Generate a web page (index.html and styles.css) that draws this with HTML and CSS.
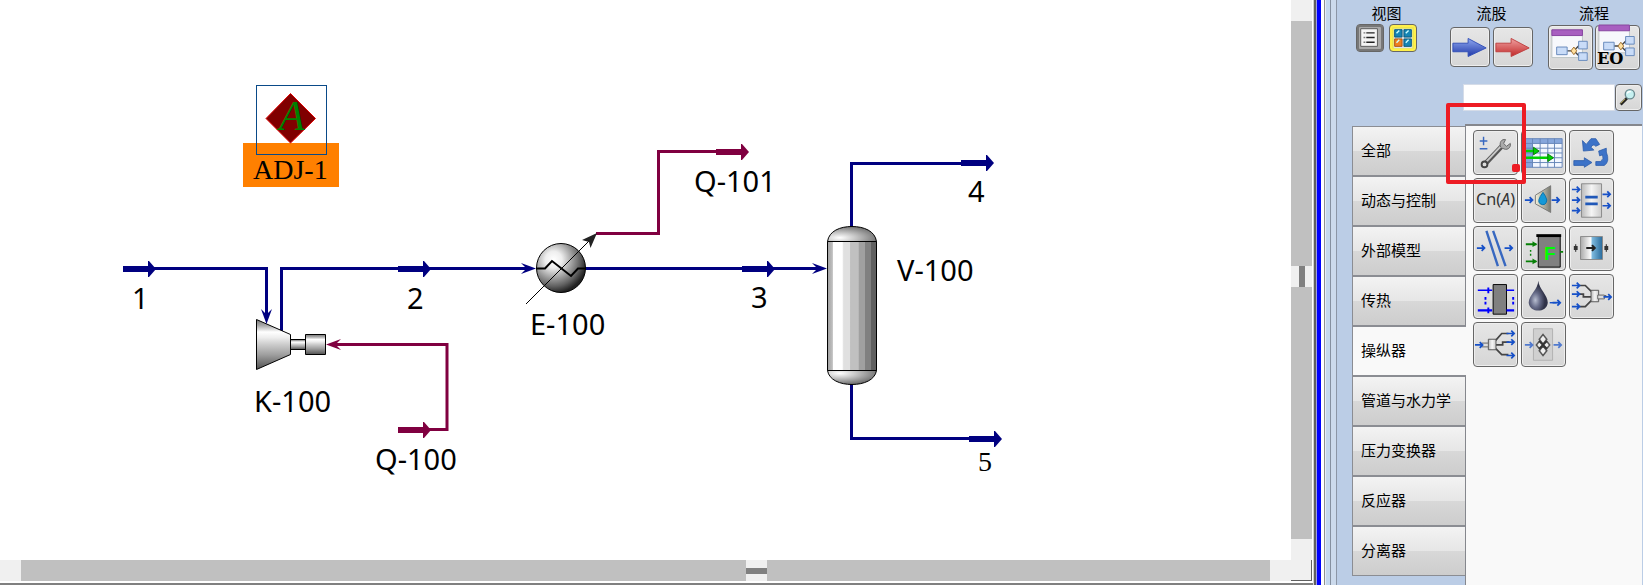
FILE: index.html
```html
<!DOCTYPE html>
<html lang="zh-CN">
<head>
<meta charset="utf-8">
<title>流程图</title>
<link rel="stylesheet" href="styles.css">
</head>
<body>
<div class="app">
  <main class="workspace">
    <div class="canvas">
      <svg class="flowsheet" width="1100" height="520" viewBox="0 0 1100 520" role="img" aria-label="工艺流程图">
        <defs>
          <linearGradient id="metalV" x1="0" y1="0" x2="0" y2="1">
            <stop offset="0" stop-color="#777"/><stop offset=".12" stop-color="#aaa"/><stop offset=".25" stop-color="#fff"/><stop offset=".36" stop-color="#eee"/><stop offset=".5" stop-color="#ccc"/><stop offset=".7" stop-color="#a0a0a0"/><stop offset="1" stop-color="#505050"/>
          </linearGradient>
          <linearGradient id="metalH">
            <stop offset="0" stop-color="#a0a0a0"/><stop offset=".1" stop-color="#c0c0c0"/><stop offset=".12" stop-color="#fff"/><stop offset=".3" stop-color="#fff"/><stop offset=".33" stop-color="#e0e0e0"/><stop offset=".46" stop-color="#e0e0e0"/><stop offset=".47" stop-color="#c0c0c0"/><stop offset=".63" stop-color="#c0c0c0"/><stop offset=".64" stop-color="#a0a0a0"/><stop offset=".76" stop-color="#a0a0a0"/><stop offset=".77" stop-color="#808080"/><stop offset=".88" stop-color="#808080"/><stop offset=".89" stop-color="#606060"/><stop offset="1" stop-color="#606060"/>
          </linearGradient>
          <radialGradient id="cap" cx=".25" cy=".75" r=".8">
            <stop offset="0" stop-color="#fff"/><stop offset=".4" stop-color="#c8c8c8"/><stop offset="1" stop-color="#707070"/>
          </radialGradient>
          <radialGradient id="capLow" cx=".25" cy=".2" r=".8">
            <stop offset="0" stop-color="#fff"/><stop offset=".4" stop-color="#c8c8c8"/><stop offset="1" stop-color="#707070"/>
          </radialGradient>
          <radialGradient id="ball" cx=".35" cy=".33" r=".68">
            <stop offset="0" stop-color="#fff"/><stop offset=".25" stop-color="#eee"/><stop offset=".55" stop-color="#a0a0a0"/><stop offset=".8" stop-color="#606060"/><stop offset="1" stop-color="#222"/>
          </radialGradient>
          <path id="stream" d="M0-3H25V-8H26L33 0L26 8H25V3H0Z"/>
          <path id="barb" d="M0 0L-15-5.500L-11-1.500V1.500L-15 5.500Z"/>
        </defs>

        <g class="material-line">
          <path d="M150 268.500H266.500V314"/>
          <path d="M281.500 331V268.500H528"/>
          <path d="M585 268.500H818"/>
          <path d="M851.500 228V163.500H965"/>
          <path d="M851.500 384V438.500H972"/>
        </g>
        <g class="energy-line">
          <path d="M425 429.500H447V344.500H336"/>
          <path d="M596 233.500H658.500V151.500H720"/>
        </g>

        <path d="M256.500 319.500L290.500 334.500V354.500L256.500 369.500Z" fill="url(#metalV)" stroke="#000"/>
        <path d="M290.500 339.500H305.500V349.500H290.500Z" fill="url(#metalV)" stroke="#000"/>
        <path d="M305.500 334.500H325.500V354.500H305.500Z" fill="url(#metalV)" stroke="#000"/>

        <circle cx="561" cy="268" r="24.500" fill="url(#ball)" stroke="#000"/>
        <path d="M536 268.500H545L552 261L571 276L578 268.500H586" fill="none" stroke="#000" stroke-width="2"/>
        <path d="M526 304L590 240" stroke="#000"/>
        <path d="M597 233L582 240L589 242L590.500 248Z" fill="#222"/>

        <path d="M827.500 241.500C829 231 840 226.500 852 226.500S875 231 876.500 241.500Z" fill="url(#cap)" stroke="#000"/>
        <path d="M827.500 370.500C829 380 840 384.500 852 384.500S875 380 876.500 370.500Z" fill="url(#capLow)" stroke="#000"/>
        <path d="M827.500 241.500H876.500V370.500H827.500Z" fill="url(#metalH)" stroke="#000"/>

        <g class="material">
          <use href="#stream" x="123" y="269"/><use href="#stream" x="398" y="269"/><use href="#stream" x="742" y="269"/><use href="#stream" x="961" y="163"/><use href="#stream" x="969" y="439"/>
          <use href="#barb" transform="translate(266.500 324) rotate(90)"/><use href="#barb" x="536" y="268.500"/><use href="#barb" x="827" y="268.500"/>
        </g>
        <g class="energy">
          <use href="#stream" x="398" y="430"/><use href="#stream" x="716" y="152"/>
          <use href="#barb" transform="translate(326 344.500) rotate(180)"/>
        </g>

        <rect x="243" y="143" width="96" height="44" fill="#ff8000"/>
        <path d="M266 118.500L290.500 93.500L315.500 118.500L290.500 143Z" fill="#800000" stroke="#e00000"/>
        <rect x="256.500" y="85.500" width="70" height="69" fill="none" stroke="#0a4a88"/>
        <text class="adjust-mark" x="279" y="130">A</text>
        <g class="labels">
          <text class="serif" x="253" y="179">ADJ-1</text>
          <text x="132" y="309">1</text><text x="407" y="309">2</text><text x="751" y="308">3</text><text x="968" y="202">4</text><text class="serif" x="978" y="471">5</text>
          <text x="254" y="412">K-100</text><text x="375" y="470">Q-100</text><text x="530" y="335">E-100</text><text x="694" y="192">Q-101</text><text x="897" y="281">V-100</text>
        </g>
      </svg>
    </div>
    <div class="scroll scroll-v"><span class="scroll-thumb"></span><span class="grip"></span><span class="scroll-thumb"></span></div>
    <div class="scroll scroll-h"><span class="scroll-thumb first"></span><span class="grip"></span><span class="scroll-thumb"></span></div>
    <div class="corner"></div>
  </main>
  <div class="divider"></div>

  <aside class="palette">
    <header class="toolbar">
      <section class="group view">
        <h2>视图</h2>
        <div class="buttons">
          <button class="btn small list" aria-label="列表"><svg viewBox="0 0 28 28"><path d="M4 4H22V23H4Z" fill="#f4f4f4" stroke="#555"/><path d="M10 8.500H19M10 13.500H19M10 18.500H19" stroke="#222" stroke-width="1.500"/><path d="M7 8.500H9M7 13.500H9M7 18.500H9" stroke="#777" stroke-width="1.500"/></svg></button>
          <button class="btn small active" aria-label="图标"><svg viewBox="0 0 28 28"><path d="M4 4H24V25H4Z" fill="#dfe6e8"/><path d="M5 5H13V13H5ZM15 5H23V13H15ZM15 15H23V23H15Z" fill="#1685b5" stroke="#075577"/><path d="M5 15H13V23H5Z" fill="#f08020" stroke="#a85010"/><path d="M7 9L10 6M17 9L20 6M17 19L20 16M7 19L10 16" stroke="#cff" stroke-width="1.500"/></svg></button>
        </div>
      </section>
      <section class="group streams">
        <h2>流股</h2>
        <div class="buttons">
          <button class="btn medium" aria-label="物流"><svg viewBox="0 0 40 40"><defs><linearGradient id="blue" x2="0" y2="1"><stop stop-color="#8fa8f0"/><stop offset="1" stop-color="#2038a8"/></linearGradient><linearGradient id="red" x2="0" y2="1"><stop stop-color="#f0a0a0"/><stop offset="1" stop-color="#c02828"/></linearGradient></defs><path d="M2 16H18V11L37 21L18 30V25H2Z" fill="url(#blue)" stroke="#3350b8"/></svg></button>
          <button class="btn medium" aria-label="能流"><svg viewBox="0 0 40 40"><path d="M2 16H18V11L37 21L18 30V25H2Z" fill="url(#red)" stroke="#c04040"/></svg></button>
        </div>
      </section>
      <section class="group">
        <h2>流程</h2>
        <div class="buttons">
          <button class="btn" aria-label="子流程"><svg viewBox="0 0 45 45"><defs><g id="sheet"><path d="M3 4H35V33H3Z" fill="#f7f8fc" stroke="#bcc4c4"/><path d="M3 4H35V10H3Z" fill="#a85fc0" stroke="#8542a0"/><path d="M19 26H25M26 26L32 20M26 26L32 32" stroke="#444" stroke-width="1.500" fill="none"/><g fill="#c9dcf8" stroke="#6688bb"><path d="M8 22H19V30H8ZM31 16H40V24H31ZM31 28H40V36H31Z"/></g><path d="M26 22L29 26L26 30L23 26Z" fill="#ffe0a0" stroke="#a07030"/></g></defs><use href="#sheet"/></svg></button>
          <button class="btn" aria-label="EO 子流程"><svg viewBox="0 0 45 45"><use href="#sheet" y="-5"/><text class="eo" x="1" y="40">EO</text></svg></button>
        </div>
      </section>
    </header>

    <form class="search">
      <input type="text" aria-label="搜索">
      <button class="btn search-btn" type="button" aria-label="搜索"><svg viewBox="0 0 27 27"><path d="M5 21L12 14" stroke="#222" stroke-width="3"/><path d="M5 20L10 15" stroke="#c8b860" stroke-width="1"/><circle cx="15" cy="10" r="5" fill="#c5f0f0" stroke="#6a8a90" stroke-width="1.500"/><path d="M12 9Q13 7 16 7" stroke="#fff" stroke-width="1.500" fill="none"/></svg></button>
    </form>

    <div class="browser">
      <nav class="tabs">
        <button class="tab">全部</button>
        <button class="tab">动态与控制</button>
        <button class="tab">外部模型</button>
        <button class="tab">传热</button>
        <button class="tab selected">操纵器</button>
        <button class="tab">管道与水力学</button>
        <button class="tab">压力变换器</button>
        <button class="tab">反应器</button>
        <button class="tab">分离器</button>
      </nav>
      <div class="tools">
        <button class="btn" aria-label="调节"><svg viewBox="0 0 45 45"><defs><path id="arr" d="M0 0H8M5-3L8 0L5 3" fill="none" stroke="#1650c8" stroke-width="1.800"/></defs><path d="M10 6V15M6 10.500H14M6 18.500H14" stroke="#3868c0" stroke-width="1.500"/><path d="M12 34L30 15" stroke="#555" stroke-width="5"/><path d="M12 33L30 14" stroke="#c9c9c9" stroke-width="2"/><circle cx="11" cy="35" r="3" fill="#ddd" stroke="#444" stroke-width="2"/><path d="M28 17C26 12 29 8 33 9L31 13L34 16L38 13C39 18 34 21 30 18" fill="#aaa" stroke="#666"/></svg></button>
        <button class="btn" aria-label="电子表格"><svg viewBox="0 0 45 45"><path d="M3 8H42V38H3Z" fill="#f3f7ff"/><path d="M3 8H42V13H3ZM3 8H11V38H3Z" fill="#86a6dc"/><path d="M3 8H42V38H3ZM3 13H42M3 18H42M3 23H42M3 28H42M3 33H42M11 8V38M19 8V38M27 8V38M34 8V38" fill="none" stroke="#6685b8"/><path d="M3 21H13M3 28H28" stroke="#00d000" stroke-width="2.500"/><path d="M12 17L18 21L12 25ZM27 24L33 28L27 32Z" fill="#00d000" stroke="#078007"/></svg></button>
        <button class="btn" aria-label="循环"><svg viewBox="0 0 45 45"><g fill="#3d73c8" stroke="#295aa8" stroke-width=".8"><path d="M4 31H15V28L23 33L15 38V36H4Z"/><path d="M13 10L14 21L25 20L22 17Q24 13 27 16L31 14L27 8H22L17 14Z"/><path d="M30 21L38 18V22Q42 32 36 36H27V32H32Q36 29 34 25L31 26Z"/></g></svg></button>
        <button class="btn" aria-label="Cn(A)"><svg viewBox="0 0 45 45"><text class="formula" x="2" y="27">Cn(<tspan font-style="italic">A</tspan>)</text></svg></button>
        <button class="btn" aria-label="切割"><svg viewBox="0 0 45 45"><path d="M14 17L30 7V35L14 26Z" fill="url(#tan)" stroke="#777"/><defs><linearGradient id="tan"><stop stop-color="#f4f2dd"/><stop offset="1" stop-color="#77786f"/></linearGradient></defs><path d="M22 14Q15 23 19 26Q25 29 26 22Q25 18 22 14" fill="#1499d8" stroke="#0870aa"/><use href="#arr" x="3" y="22"/><use href="#arr" x="31" y="22"/></svg></button>
        <button class="btn" aria-label="平衡"><svg viewBox="0 0 45 45"><defs><linearGradient id="plate"><stop stop-color="#bbb"/><stop offset=".5" stop-color="#f5f5f5"/><stop offset="1" stop-color="#ccc"/></linearGradient></defs><path d="M12 5H33V40H12Z" fill="url(#plate)" stroke="#888"/><path d="M16 19H29M16 26H29" stroke="#2058b8" stroke-width="3"/><use href="#arr" x="2" y="11"/><use href="#arr" x="2" y="22"/><use href="#arr" x="2" y="33"/><use href="#arr" x="34" y="16"/><use href="#arr" x="34" y="28"/></svg></button>
        <button class="btn" aria-label="边界"><svg viewBox="0 0 45 45"><path d="M13 4L25 41M20 4L33 41" stroke="#3868c0" stroke-width="2.500"/><use href="#arr" x="3" y="22"/><use href="#arr" x="32" y="22"/></svg></button>
        <button class="btn" aria-label="公式"><svg viewBox="0 0 45 45"><path d="M17 10H40V42H17Z" fill="#808080" stroke="#000"/><path d="M15 9H41" stroke="#000" stroke-width="3"/><path d="M4 18H15M4 36H15M40 26H43" stroke="#078007" stroke-width="2"/><path d="M11 15L16 18L11 21ZM11 33L16 36L11 39Z" fill="#078007"/><path d="M9 24V32" stroke="#078007" stroke-width="1.500" stroke-dasharray="2 2"/><text class="function" x="23" y="35">F</text></svg></button>
        <button class="btn" aria-label="流股变换"><svg viewBox="0 0 45 45"><defs><linearGradient id="change"><stop stop-color="#aaa"/><stop offset=".48" stop-color="#fff"/><stop offset=".52" stop-color="#80bce0"/><stop offset="1" stop-color="#286a9b"/></linearGradient></defs><path d="M11 10H34V34H11Z" fill="url(#change)" stroke="#888"/><path d="M17 22H26M23 19L26 22L23 25" fill="none" stroke="#222" stroke-width="2"/><path d="M6 18V26M38 18V26" stroke="#222"/><path d="M4 20H8V24H4ZM36 20H40V24H36Z" fill="#333"/></svg></button>
        <button class="btn" aria-label="黑箱"><svg viewBox="0 0 45 45"><path d="M20 10H34V41H20Z" fill="#808080" stroke="#000"/><path d="M4 16H19M34 16H42" stroke="#00f" stroke-width="1.500"/><path d="M4 37H19M34 37H42" stroke="#00f" stroke-width="2.500"/><path d="M15 13V19M15 34V40" stroke="#00f" stroke-width="2"/><path d="M12 23V32M41 23V32" stroke="#00f" stroke-width="2" stroke-dasharray="3 2"/></svg></button>
        <button class="btn" aria-label="饱和"><svg viewBox="0 0 45 45"><defs><radialGradient id="drop" cx=".35" cy=".65"><stop stop-color="#b8bed0"/><stop offset=".5" stop-color="#666b88"/><stop offset="1" stop-color="#303348"/></radialGradient></defs><path d="M17 6C17 15 7 21 7 29C8 40 26 40 27 29C27 21 18 15 17 6Z" fill="url(#drop)"/><use href="#arr" x="32" y="29"/><path d="M29 29H36" stroke="#1650c8" stroke-width="1.500"/></svg></button>
        <button class="btn" aria-label="混合"><svg viewBox="0 0 45 45"><path d="M10 11H16L23 18M10 20H14V23H22M10 33H16L23 26M30 22H38" fill="none" stroke="#444" stroke-width="1.800"/><path d="M22 16H30V28H22Z" fill="url(#plate)" stroke="#555"/><path d="M29 21H36V25H29Z" fill="#ddd" stroke="#666"/><use href="#arr" x="2" y="11"/><use href="#arr" x="2" y="20"/><use href="#arr" x="2" y="33"/><use href="#arr" x="35" y="23"/></svg></button>
        <button class="btn" aria-label="选择"><svg viewBox="0 0 45 45"><path d="M22 19L29 11H36M22 23H30V20H37M22 26L29 33H36M8 22H15" fill="none" stroke="#444" stroke-width="1.800"/><path d="M15 17H23V28H15Z" fill="url(#plate)" stroke="#555"/><path d="M8 21H15V25H8Z" fill="#ddd" stroke="#666"/><use href="#arr" x="34" y="11"/><use href="#arr" x="34" y="20"/><use href="#arr" x="34" y="34"/><use href="#arr" x="1" y="23"/></svg></button>
        <button class="btn" aria-label="用户单元"><svg viewBox="0 0 45 45"><path d="M12 6H32V39H12Z" fill="#d0d0d0" stroke="#b0b0b0"/><g fill="#eee" stroke="#555" stroke-width="1.500"><path d="M22 12L26 17L22 22L18 17ZM22 24L26 29L22 34L18 29ZM15 23L19 18L22 23L19 28ZM29 23L25 18L22 23L25 28Z"/></g><path d="M18 19L26 27M26 19L18 27" stroke="#333" stroke-width="2"/><g opacity=".7"><use href="#arr" x="3" y="23"/><use href="#arr" x="33" y="23"/></g></svg></button>
        <span class="highlight"></span>
      </div>
    </div>
  </aside>
</div>
</body>
</html>
```
FILE: styles.css
```css
* { box-sizing: border-box; }

body {
  margin: 0;
  overflow: hidden;
  background: #fff;
  color: #000;
  font: 15px/20px "Liberation Sans", "Noto Sans CJK SC", sans-serif;
}

.app {
  display: grid;
  grid-template-columns: minmax(0, 1fr) 24px 306px;
  height: 100vh;
}

/* Flowsheet and its scroll bars */
.workspace {
  display: grid;
  grid-template: minmax(0, 1fr) 21px / minmax(0, 1fr) 21px;
  padding: 0 1px 2px 0;
  border-bottom: 2px solid #808080;
}
.canvas { overflow: hidden; background: #fff; }
.flowsheet { display: block; }
.material-line, .energy-line { fill: none; stroke: #000080; stroke-width: 3; }
.energy-line { stroke: #800040; }
.material { fill: #000080; }
.energy { fill: #800040; }
.labels { font-family: "Noto Sans", sans-serif; font-size: 29px; }
.labels .serif { font-family: "Liberation Serif", serif; font-size: 28px; }
.adjust-mark { fill: #008000; font: italic 42px "Liberation Serif", serif; }

.scroll { display: flex; background: #f0f0f0; }
.scroll-v { flex-direction: column; padding: 21px 0; }
.scroll-h { padding: 0 21px; }
.scroll-thumb { flex: 251; background: #c0c0c0; }
.scroll-v .scroll-thumb:first-child { flex: 244; }
.scroll-h .scroll-thumb { flex: 503; }
.scroll-h .first { flex: 725; }
.grip { flex: none; width: 21px; height: 21px; background: linear-gradient(#808080, #808080) center / 21px 6px no-repeat; }
.scroll-v .grip { background-size: 6px 21px; }
.corner { border: 1px solid #606060; border-width: 0 1px 1px 0; background: #f0f0f0; }

.divider {
  background: linear-gradient(90deg, #d0d0d0 1px, #606060 1px 3px, #a0a0e0 3px 4px, #0000ff 4px 8px, #fff 8px 11px, #909090 11px 12px, #e8eef5 12px 13px, #c5d9ef 13px 17px, #8590a0 17px 18px, #ccdaec 18px 23px, #8c96a6 23px 24px);
}

/* Object palette */
.palette {
  display: flex;
  flex-direction: column;
  padding: 4px 1px 0 15px;
  background: #bbcde6;
}
.toolbar { display: flex; height: 66px; padding-left: 4px; }
.group h2 { margin: 0; font-size: 15px; font-weight: 400; line-height: 20px; text-align: center; }
.group.view { margin-right: 33px; }
.group.streams { margin-right: 15px; }
.buttons { display: flex; gap: 2px; padding-top: 1px; }
.streams .buttons { padding-top: 3px; gap: 3px; }
.view .buttons { padding-top: 0; gap: 5px; }

.btn {
  flex: none;
  width: 45px;
  height: 45px;
  padding: 0;
  border: 1px solid #666;
  border-radius: 4px;
  background: linear-gradient(#e6e6e6, #d6d6d6);
  box-shadow: inset 0 0 0 1px #eee;
}
.btn svg { display: block; width: 100%; height: 100%; overflow: visible; }
.btn.medium { width: 40px; height: 40px; }
.btn.small { width: 28px; height: 28px; }
.btn.list { background: #aaa; box-shadow: inset 0 0 0 2px #777; }
.btn.active { background: #eee84a; box-shadow: inset 0 0 0 2px #fff04a; }
.eo { font: bold 17px "DejaVu Serif", serif; }
.formula { fill: #333; font: 17px "Noto Sans", sans-serif; }
.function { fill: #00ff00; font: bold 20px "Liberation Sans", sans-serif; }

.search { display: flex; height: 27px; margin: 14px 0 13px 111px; }
.search input {
  flex: 1;
  min-width: 0;
  padding: 0 4px;
  border: 1px solid #d5dce8;
  background: #fff;
  font: inherit;
}
.search .search-btn { width: 27px; height: 27px; }

.browser { display: grid; grid-template-columns: 114px minmax(0, 1fr); flex: 1; min-height: 0; }
.tabs { padding-top: 2px; border-right: 1px solid #85878d; }
.tab {
  display: block;
  width: 100%;
  height: 50px;
  padding: 0 8px;
  border: solid #8b8d93;
  border-width: 1px 0 1px 1px;
  background: linear-gradient(#f3f3f3, #e6e6e6 50%, #d8d8d8 50%, #cdcdcd);
  font: inherit;
  text-align: left;
}
.tab.selected { width: 114px; background: #f9f9f9; }

.tools {
  position: relative;
  display: grid;
  grid-template-columns: repeat(3, 45px);
  grid-auto-rows: 45px;
  align-content: start;
  gap: 3px;
  padding: 4px 0 0 7px;
  border-top: 2px solid #85878d;
  background: #f9f9f9;
}
.highlight {
  position: absolute;
  top: -23px;
  left: -20px;
  width: 80px;
  height: 81px;
  border: 4px solid #ed1c24;
  border-radius: 2px;
  pointer-events: none;
}
.highlight::after {
  content: "";
  position: absolute;
  right: 2px;
  bottom: 8px;
  width: 8px;
  height: 8px;
  border-radius: 2px;
  background: #ed1c24;
}
```
